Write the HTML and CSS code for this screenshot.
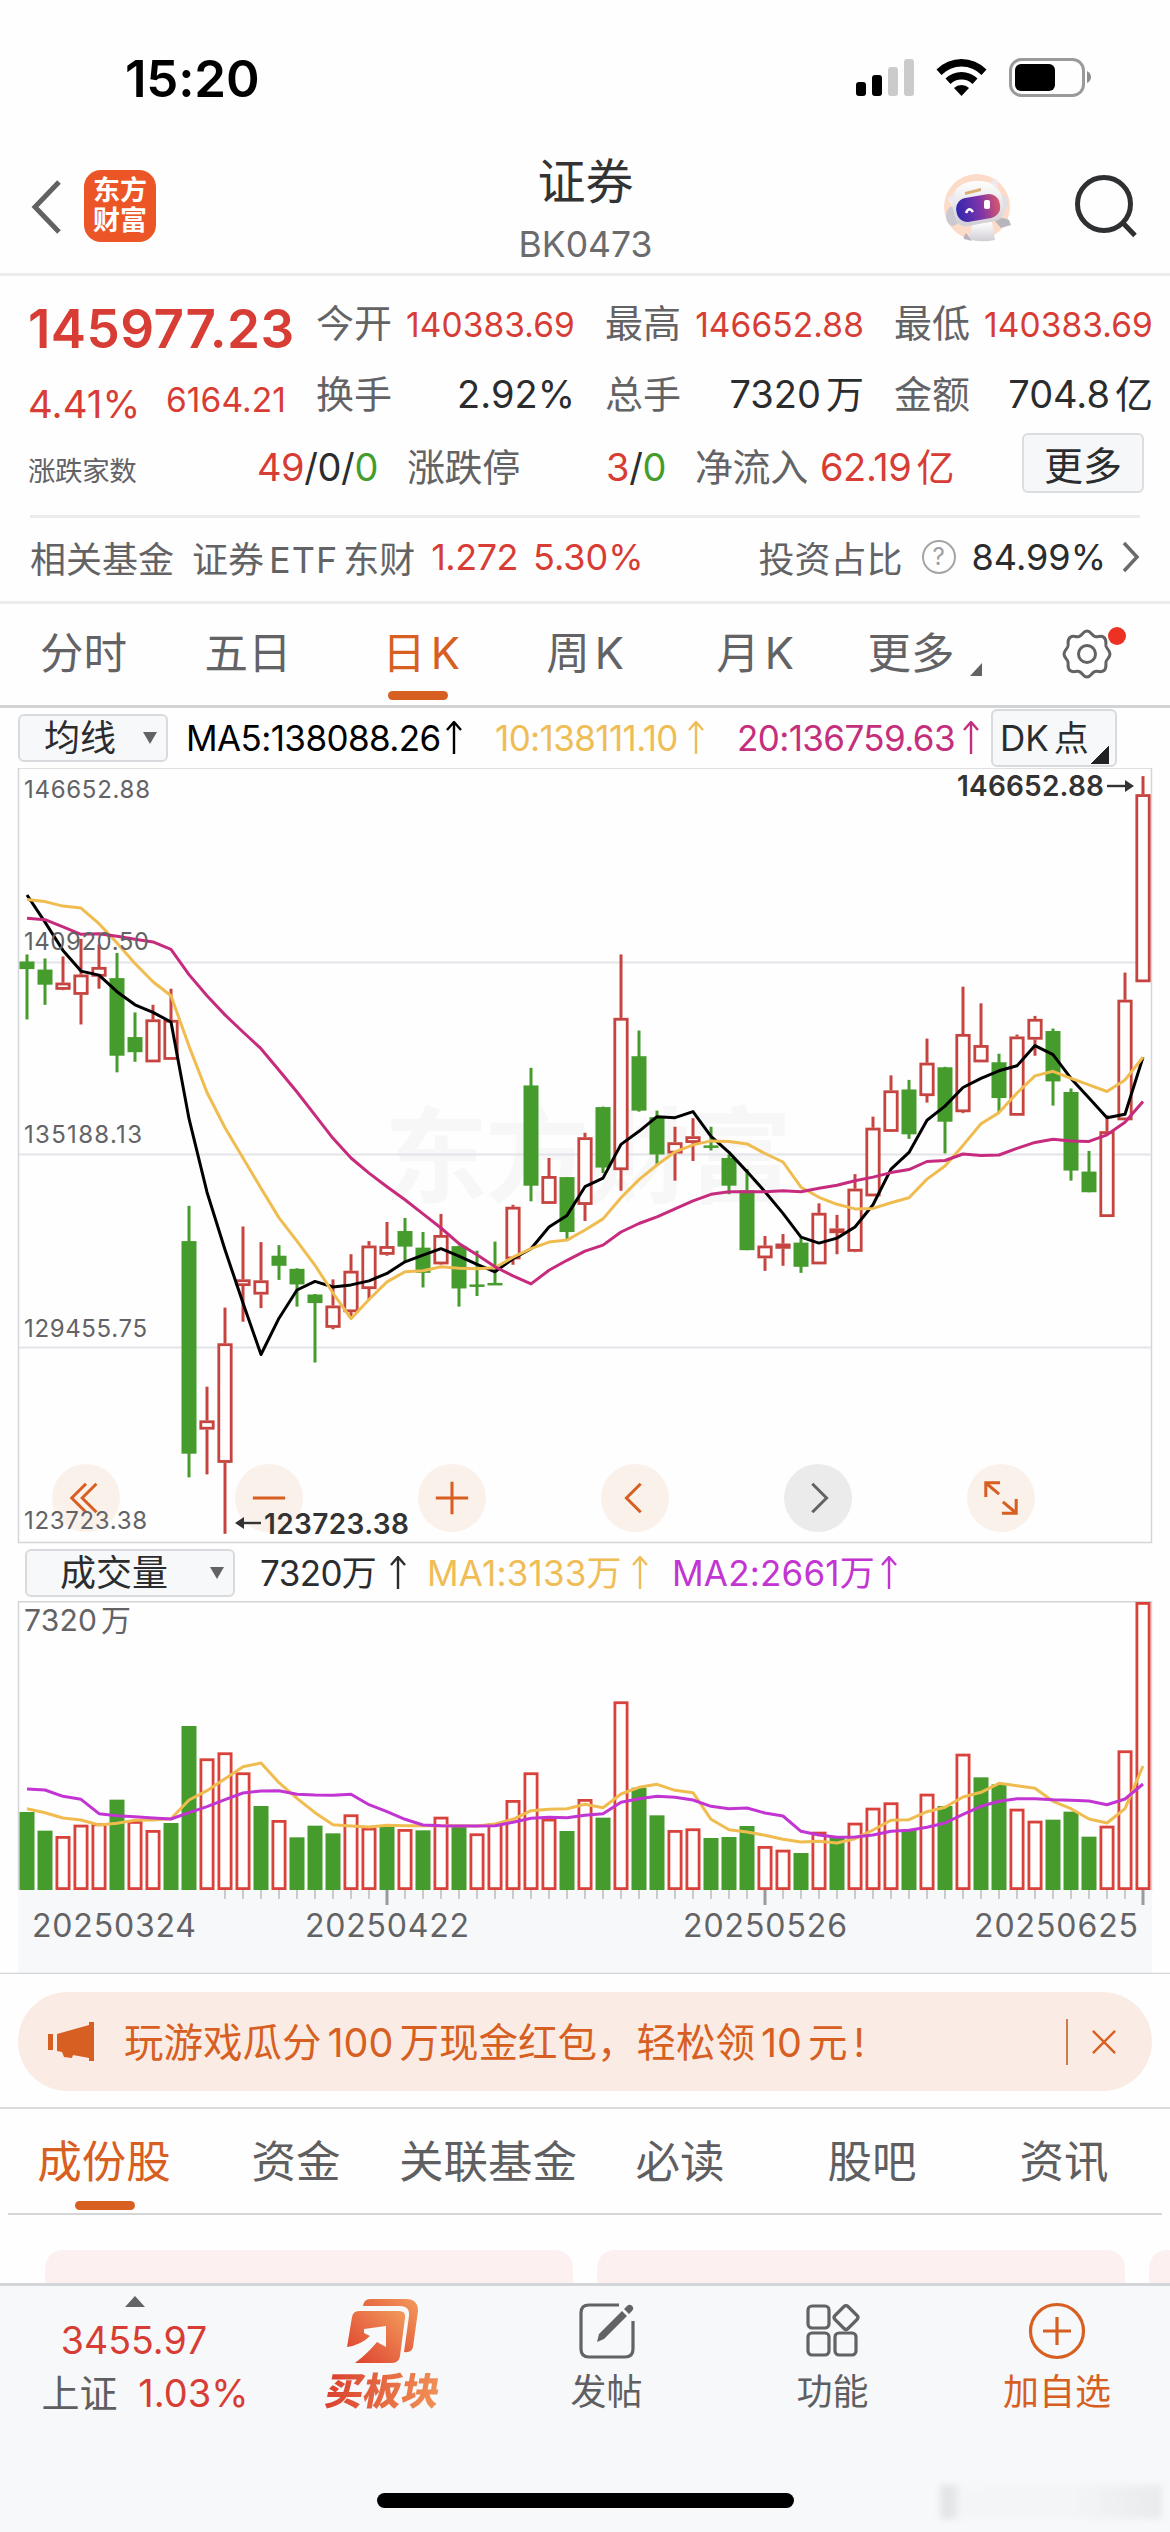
FILE: index.html
```html
<!DOCTYPE html>
<html lang="zh-CN">
<head>
    <meta charset="UTF-8">
    <meta name="viewport" content="width=device-width, initial-scale=1.0">
    <title>证券 BK0473</title>
    <link rel="stylesheet" href="styles.css">
</head>
<body>
    <!-- 状态栏 -->
    <div class="status-bar">
        <span class="time">15:20</span>
        <svg class="status-icons" width="240" height="40" viewBox="0 0 240 40">
            <rect x="1" y="24" width="10" height="14" rx="3"/>
            <rect x="17" y="17" width="10" height="21" rx="3"/>
            <rect x="33" y="9" width="10" height="29" rx="3" fill="#cbcbcb"/>
            <rect x="49" y="1" width="10" height="37" rx="3" fill="#cbcbcb"/>
            <path d="M81.500 11.500a35 35 0 0 1 50 0l-5 5.500a28 28 0 0 0-40 0z"/>
            <path d="M90.500 20.500a23 23 0 0 1 32 0l-5 5.500a16 16 0 0 0-22 0z"/>
            <path d="M99 30a11 11 0 0 1 15 0l-7.500 8z"/>
            <rect x="155.500" y="1.500" width="73" height="36" rx="11" fill="none" stroke="#9a9a9a" stroke-width="3"/>
            <rect x="160" y="6" width="40" height="27" rx="6"/>
            <path d="M232 13v12q4-2 4-6t-4-6z" fill="#8f8f8f"/>
        </svg>
    </div>

    <!-- 标题栏 -->
    <div class="header">
        <svg class="back" width="32" height="56" viewBox="0 0 32 56"><path d="M28 3L4 28l24 25"/></svg>
        <div class="logo">东方<br>财富</div>
        <div class="title">
            <h1>证券</h1>
            <p>BK0473</p>
        </div>
        <svg class="robot" width="68" height="68" viewBox="0 0 68 68">
            <defs>
                <linearGradient id="face" x1="0" y1="0" x2="1" y2="0">
                    <stop offset="0" stop-color="#3026b0"/>
                    <stop offset=".55" stop-color="#7d35a8"/>
                    <stop offset="1" stop-color="#d9586c"/>
                </linearGradient>
                <linearGradient id="shell" x1="0" y1="0" x2="0" y2="1">
                    <stop offset="0" stop-color="#fff"/>
                    <stop offset="1" stop-color="#d0cdd3"/>
                </linearGradient>
            </defs>
            <circle cx="33" cy="33" r="33" fill="#fcdcc9"/>
            <path d="M28 50l-3 15q10 4 26 1l-3-18z" fill="url(#shell)"/>
            <path d="M22 59q-3 4-2 6l8 2M50 46q8-4 15 0l2 5-10 3z" fill="#b9b5bd"/>
            <ellipse cx="9" cy="42" rx="7" ry="10" fill="#cdc9d0"/>
            <ellipse cx="57" cy="29" rx="7" ry="9" fill="#e2dee2"/>
            <path d="M7 28Q10 8 32 7q20-1 26 15l2 15q0 8-9 10l-27 5q-9 1-12-6z" fill="url(#shell)"/>
            <path d="M3 24l9-5-4 14zM46 8l7-3 1 11z" fill="#f0e8ec"/>
            <path d="M21 18l16-4v3l-16 4z" fill="#d9b071"/>
            <rect x="12" y="22" width="44" height="24" rx="11" transform="rotate(-10 34 33)" fill="url(#face)"/>
            <path d="M22 39q3-7 7-1" fill="none" stroke="#fff" stroke-width="2.500"/>
            <rect x="40" y="26" width="6" height="9" rx="2" fill="#fff"/>
        </svg>
        <svg class="search" width="66" height="66" viewBox="0 0 66 66"><circle cx="30" cy="30" r="26.500"/><path d="M48.500 48.500L61 61.500"/></svg>
    </div>

    <!-- 行情概览 -->
    <div class="quote">
        <div class="quote-grid">
            <b class="price">145977.23</b>
            <div class="cell"><label>今开</label><span class="num red">140383.69</span></div>
            <div class="cell"><label>最高</label><span class="num red">146652.88</span></div>
            <div class="cell"><label>最低</label><span class="num red">140383.69</span></div>
            <div class="change red"><span class="pct">4.41%</span><span class="num">6164.21</span></div>
            <div class="cell"><label>换手</label><span>2.92%</span></div>
            <div class="cell"><label>总手</label><span>7320<i>万</i></span></div>
            <div class="cell"><label>金额</label><span>704.8<i>亿</i></span></div>
        </div>
        <div class="quote-row">
            <div class="cell updown"><label class="small">涨跌家数</label><span><em class="red">49</em>/0/<em class="green">0</em></span></div>
            <div class="cell limit"><label>涨跌停</label><span><em class="red">3</em>/<em class="green">0</em></span></div>
            <div class="cell inflow"><label>净流入</label><span class="red">62.19<i>亿</i></span></div>
            <button class="more">更多</button>
        </div>
        <div class="fund">
            <label>相关基金</label>
            <label class="fund-name">证券<span>ETF</span>东财</label>
            <span class="red fund-price">1.272</span>
            <span class="red">5.30%</span>
            <label class="ratio">投资占比</label>
            <span class="help">?</span>
            <span class="ratio-num">84.99%</span>
            <svg width="18" height="32" viewBox="0 0 18 32"><path d="M2 2l13 14L2 30"/></svg>
        </div>
    </div>

    <!-- 周期切换 -->
    <div class="period-tabs">
        <div>分时</div>
        <div>五日</div>
        <div class="active">日<span>K</span></div>
        <div>周<span>K</span></div>
        <div>月<span>K</span></div>
        <div class="has-more">更多</div>
        <div class="setting">
            <svg width="50" height="50" viewBox="0 0 50 50">
                <path d="M25 2c4 0 4.500 4.500 8 5.500 3.500.8 6-1.500 9 1s1.500 5.500 2 8.500c.6 3 4 4.500 4 8s-3.400 5-4 8c-.5 3 1 6-2 8.500s-5.500.2-9 1C29.500 43.500 29 48 25 48s-4.500-4.500-8-5.500c-3.500-.8-6 1.500-9-1S6.500 36 6 33c-.6-3-4-4.500-4-8s3.400-5 4-8c.5-3-1-6 2-8.500s5.500-.2 9-1C20.500 6.500 21 2 25 2z"/>
                <circle cx="25" cy="25" r="8.500"/>
            </svg>
        </div>
    </div>

    <!-- K线 -->
    <div class="ma-row">
        <div class="select">均线<i></i></div>
        <span class="ma ma5">MA5:138088.26<svg class="up"><use href="#up"/></svg></span>
        <span class="ma ma10">10:138111.10<svg class="up"><use href="#up"/></svg></span>
        <span class="ma ma20">20:136759.63<svg class="up"><use href="#up"/></svg></span>
        <div class="dk">DK<span>点</span></div>
    </div>
    <div class="k-chart">
        <div class="chart-tools">
            <span><svg viewBox="0 0 40 40"><path d="M20 5L5 20l15 15M31 5L16 20l15 15"/></svg></span>
            <span><svg viewBox="0 0 40 40"><path d="M3 20h34"/></svg></span>
            <span><svg viewBox="0 0 40 40"><path d="M3 20h34M20 3v34"/></svg></span>
            <span><svg viewBox="0 0 40 40"><path d="M26 5L11 20l15 15"/></svg></span>
            <span class="off"><svg viewBox="0 0 40 40"><path d="M14 5l15 15-15 15"/></svg></span>
            <span><svg viewBox="0 0 40 40"><path d="M19 4H4v15M5 5l13 11M22 24l13 11M21 36h15V21"/></svg></span>
        </div>
        <svg id="kline" width="1170" height="776" viewBox="0 0 1170 776"></svg>
    </div>

    <!-- 成交量 -->
    <div class="vol-row">
        <div class="select">成交量<i></i></div>
        <span class="ma vol">7320万<svg class="up"><use href="#up"/></svg></span>
        <span class="ma vol1">MA1:3133万<svg class="up"><use href="#up"/></svg></span>
        <span class="ma vol2">MA2:2661万<svg class="up"><use href="#up"/></svg></span>
    </div>
    <svg id="volume" width="1170" height="373" viewBox="0 0 1170 373"></svg>

    <!-- 活动横幅 -->
    <div class="banner-wrap">
        <div class="banner">
            <svg class="horn" width="48" height="42" viewBox="0 0 48 42"><path d="M0 13h5v16H0zM9 13L41 4V1h5v39h-5v-3l-16-3-1 3-8-1-2-5-5-1z"/></svg>
            <p>玩游戏瓜分<span>100</span>万现金红包，轻松领<span>10</span>元<span>!</span></p>
            <svg class="close" width="26" height="26" viewBox="0 0 26 26"><path d="M1 1l24 24M25 1L1 25"/></svg>
        </div>
    </div>

    <div class="info-tabs">
        <div class="active">成份股</div>
        <div>资金</div>
        <div>关联基金</div>
        <div>必读</div>
        <div>股吧</div>
        <div>资讯</div>
    </div>
    <div class="cards"><div></div><div></div><div></div></div>

    <!-- 底部工具栏 -->
    <div class="toolbar">
        <div class="index">
            <i class="tri"></i>
            <span class="red index-num">3455.97</span>
            <p>上证 <span class="red">1.03%</span></p>
        </div>
        <div class="buy">
            <svg width="72" height="66" viewBox="0 0 72 66">
                <defs>
                    <linearGradient id="fire" x1="0" y1="1" x2="1" y2="0">
                        <stop offset="0" stop-color="#dd3d2c"/>
                        <stop offset="1" stop-color="#f29a5c"/>
                    </linearGradient>
                </defs>
                <path fill="url(#fire)" d="M16 8q1-7 7-7h36q12 0 12 12l-5 36q-1 6-9 5l5-36q1-10-9-10z"/>
                <path fill="url(#fire)" d="M5 19q1-6 7-6h40q7 0 6 7l-5 38q-1 7-8 7H8q12-9 22-21l9 5V28l-22 3v4l6 3Q14 47 0 49z"/>
            </svg>
            <b>买板块</b>
        </div>
        <div>
            <svg class="line-icon" width="60" height="60" viewBox="0 0 60 60">
                <path d="M42 4H12q-8 0-8 8v36q0 8 8 8h36q8 0 8-8V20"/>
                <path class="pen" d="M50 5q2-2 4-1l2 2q1 2-1 4l-3 3-5-5zM45 10l5 5-23 23-7 3 2-8z"/>
            </svg>
            <p>发帖</p>
        </div>
        <div>
            <svg class="line-icon" width="60" height="60" viewBox="0 0 60 60">
                <rect x="5" y="5" width="21" height="22" rx="4"/>
                <rect x="5" y="32" width="21" height="22" rx="4"/>
                <rect x="32" y="32" width="21" height="22" rx="4"/>
                <path d="M41 5.500q2-2 4 0l9 9q2 2 0 4l-9 9q-2 2-4 0l-9-9q-2-2 0-4z"/>
            </svg>
            <p>功能</p>
        </div>
        <div class="add">
            <svg class="line-icon" width="60" height="60" viewBox="0 0 60 60"><circle cx="30" cy="30" r="26.500"/><path d="M16 30h28M30 16v28"/></svg>
            <p>加自选</p>
        </div>
    </div>
    <div class="home">
        <div class="home-bar"></div>
        <div class="smudge"></div>
    </div>

    <svg width="0" height="0" class="sprite">
        <symbol id="up" viewBox="0 0 16 34"><path d="M8 33V2M1 9l7-8 7 8" fill="none" stroke="currentColor" stroke-width="2.400"/></symbol>
    </svg>

    <script src="chart.js"></script>
</body>
</html>
```
FILE: styles.css
```css
* {
    box-sizing: border-box;
    margin: 0;
    padding: 0;
}

body {
    width: 1170px;
    height: 2532px;
    overflow: hidden;
    background: #fefefe;
    color: #2b2c2e;
    font-family: Inter, "Noto Sans CJK SC", sans-serif;
    font-size: 37px;
}

i, em {
    font-style: normal;
}

svg {
    display: block;
    flex: none;
}

.sprite {
    position: absolute;
}

.red {
    color: #d73d35;
}

.green {
    color: #459c2c;
}

/* 状态栏 */
.status-bar {
    height: 140px;
    padding: 16px 75px 0 125px;
    display: flex;
    align-items: center;
    justify-content: space-between;
    color: #000;
}

.time {
    font-size: 51px;
    font-weight: 600;
    letter-spacing: -0.2px;
}

/* 标题栏 */
.header {
    height: 136px;
    padding: 0 30px 0 31px;
    border-bottom: 3px solid #ececee;
    display: flex;
    align-items: flex-start;
    position: relative;
}

.back {
    margin-top: 39px;
    fill: none;
    stroke: #626265;
    stroke-width: 5;
}

.logo {
    width: 72px;
    height: 72px;
    margin: 30px 0 0 21px;
    padding-top: 6px;
    border-radius: 17px;
    background: #ec5626;
    color: #fff;
    font-size: 27px;
    font-weight: 700;
    line-height: 30px;
    text-align: center;
}

.title {
    flex: 1;
    padding-left: 71px;
    text-align: center;
}

.title h1 {
    margin-top: 15px;
    font-size: 48px;
    font-weight: 400;
    line-height: 54px;
    color: #333;
}

.title p {
    margin-top: 14px;
    font-size: 35.500px;
    line-height: 44px;
    color: #6b6b6e;
}

.robot {
    margin: 34px 62px 0 0;
}

.search {
    margin-top: 34px;
    fill: none;
    stroke: #2f3031;
    stroke-width: 5;
}

/* 行情概览 */
.quote {
    height: 328px;
    border-bottom: 3px solid #ececee;
}

.quote label {
    color: #636366;
}

.quote-grid {
    height: 154px;
    padding: 12px 19px 0 28px;
    display: grid;
    grid-template-columns: 258px 259px 259px 259px;
    grid-template-rows: 71px 72px;
    column-gap: 30px;
}

.price {
    color: #d73d35;
    font-size: 53px;
    font-weight: 600;
    line-height: 82px;
    letter-spacing: 0.4px;
}

.cell {
    display: flex;
    justify-content: space-between;
    align-items: baseline;
    line-height: 70px;
    white-space: nowrap;
    font-size: 38px;
}

.cell i {
    margin-left: 5px;
}

.cell .num, .change .num {
    font-size: 33.500px;
    letter-spacing: 0.1px;
}

.change {
    display: flex;
    justify-content: space-between;
    line-height: 90px;
    font-size: 38.500px;
}

.change .num {
    line-height: 82px;
}

.quote-row {
    height: 88px;
    margin: 0 30px;
    display: flex;
    border-bottom: 3px solid #ececee;
}

.quote-row .cell {
    line-height: 74px;
    letter-spacing: -0.4px;
}

.cell .small {
    margin-left: -2px;
    font-size: 27.500px;
}

.updown {
    width: 348px;
    margin-right: 29px;
}

.limit {
    width: 259px;
    margin-right: 29px;
}

.inflow {
    width: 259px;
}

.more {
    width: 122px;
    height: 60px;
    margin: 3px -4px 0 auto;
    border: 2px solid #dcdde0;
    border-radius: 6px;
    background: #f6f7f9;
    color: #2b2c2e;
    font: 39px/56px "Noto Sans CJK SC", sans-serif;
}

.fund {
    height: 78px;
    padding: 0 30px;
    display: flex;
    align-items: center;
    font-size: 36px;
    white-space: nowrap;
}

.fund-name {
    margin: 0 16px 0 18px;
}

.fund-name span {
    margin: 0 5px;
    letter-spacing: 1px;
}

.fund-price {
    margin-right: 15px;
    letter-spacing: -0.5px;
}

.ratio {
    margin-left: auto;
}

.help {
    width: 34px;
    height: 34px;
    margin: 0 16px 0 19px;
    border: 2px solid #a5a5a8;
    border-radius: 50%;
    color: #a0a0a3;
    font-size: 24px;
    line-height: 30px;
    text-align: center;
}

.ratio-num {
    margin-right: 16px;
}

.fund svg {
    fill: none;
    stroke: #6a6a6d;
    stroke-width: 3.500;
}

/* 周期切换 */
.period-tabs {
    height: 104px;
    border-bottom: 3px solid #d2d3d5;
    display: grid;
    grid-template-columns: 167px 162px 184px 144px 196px 116px 201px;
    font-size: 43.500px;
    line-height: 99px;
    color: #636366;
    text-align: center;
}

.period-tabs > div {
    position: relative;
}

.period-tabs span {
    margin-left: 5px;
}

.period-tabs .active, .info-tabs .active {
    color: #d75f22;
}

.period-tabs .active::after {
    content: "";
    position: absolute;
    left: 59px;
    bottom: 5px;
    width: 60px;
    height: 9px;
    border-radius: 5px;
    background: #d75f22;
}

.has-more::after {
    content: "";
    position: absolute;
    right: -13px;
    top: 59px;
    border-left: 12px solid transparent;
    border-bottom: 13px solid #636366;
}

.setting svg {
    margin: 25px 0 0 93px;
    fill: none;
    stroke: #636366;
    stroke-width: 3;
}

.setting::after {
    content: "";
    position: absolute;
    left: 139px;
    top: 23px;
    width: 18px;
    height: 18px;
    border-radius: 50%;
    background: #eb3223;
}

/* 指标行 */
.ma-row, .vol-row {
    height: 60px;
    padding-left: 18px;
    display: flex;
    font-size: 35px;
    white-space: nowrap;
}

.select {
    width: 150px;
    height: 48px;
    margin-top: 6px;
    padding: 0 9px 0 24px;
    border: 2px solid #d9dadd;
    border-radius: 6px;
    background: #f7f8fa;
    display: flex;
    align-items: center;
    justify-content: space-between;
    font-size: 36px;
    line-height: 44px;
}

.select i {
    border: 7px solid transparent;
    border-top: 12px solid #636366;
    border-bottom: 0;
}

.ma {
    display: flex;
    justify-content: space-between;
    align-items: center;
    line-height: 60px;
    letter-spacing: -0.6px;
}

.up {
    width: 16px;
    height: 34px;
}

.ma5 {
    width: 276px;
    margin-left: 18px;
    color: #000;
}

.ma10 {
    width: 209px;
    margin-left: 33px;
    color: #efbd55;
}

.ma20 {
    width: 242px;
    margin-left: 33px;
    color: #c42e7d;
}

.dk {
    width: 126px;
    height: 58px;
    margin: 1px 0 0 12px;
    padding-left: 7px;
    border: 2px solid #d9dadd;
    border-radius: 6px;
    background: linear-gradient(to bottom right, transparent 50%, #222 50%) 97px 35px / 19px 18px no-repeat #f7f8fa;
    line-height: 54px;
}

.dk span {
    margin-left: 5px;
}

/* 图表 */
.k-chart {
    height: 776px;
    position: relative;
}

/* 曲线和价格盖在按钮上面 */
#kline {
    position: relative;
}

.chart-tools {
    position: absolute;
    left: 52px;
    top: 696px;
    display: flex;
    gap: 115px;
}

.chart-tools span {
    width: 68px;
    height: 68px;
    border-radius: 50%;
    background: #fbf1eb;
    display: flex;
    align-items: center;
    justify-content: center;
}

.chart-tools svg {
    width: 38px;
    height: 38px;
    fill: none;
    stroke: #d75f22;
    stroke-width: 3.200;
}

.chart-tools .off {
    background: #ebebec;
}

.off svg {
    stroke: #636366;
}

.label {
    font-size: 24px;
    fill: #636366;
}

.mark {
    font-size: 28px;
    font-weight: 600;
    fill: #333;
}

.watermark {
    font-size: 104px;
    font-weight: 700;
    fill: #f7f7f8;
}

.vol-row {
    height: 57px;
    padding-left: 25px;
}

.vol-row .select {
    width: 210px;
    margin-top: 5px;
    padding-left: 33px;
}

.vol {
    width: 146px;
    margin-left: 25px;
}

.vol1 {
    width: 221px;
    margin-left: 21px;
    color: #efbd55;
    letter-spacing: 0.2px;
}

.vol2 {
    width: 225px;
    margin-left: 24px;
    color: #c235d2;
    letter-spacing: 0.2px;
}

.vol-label {
    font-size: 30px;
    fill: #636366;
}

.date {
    font-size: 32px;
    fill: #636366;
}

/* 活动横幅 */
.banner-wrap {
    height: 135px;
    padding: 18px 18px 0;
    border-bottom: 2px solid #d9dadc;
}

.banner {
    height: 99px;
    padding: 0 36px 0 30px;
    border-radius: 50px;
    background: #faece5;
    color: #d75f22;
    display: flex;
    align-items: center;
    font-size: 39.500px;
}

.horn {
    fill: #d75f22;
}

.banner p {
    margin: -5px 0 0 28px;
}

.banner span {
    margin: 0 6px;
}

.close {
    width: 50px;
    height: 46px;
    margin-left: auto;
    padding: 10px 0 10px 24px;
    border-left: 2px solid #d07a50;
    fill: none;
    stroke: #d75f22;
    stroke-width: 2.600;
}

.info-tabs {
    height: 106px;
    margin: 0 8px;
    border-bottom: 2px solid #d4d5d7;
    display: grid;
    grid-template-columns: repeat(6, 192px);
    font-size: 44.500px;
    line-height: 106px;
    color: #5f5f62;
    text-align: center;
    white-space: nowrap;
}

.info-tabs .active {
    position: relative;
}

.info-tabs .active::after {
    content: "";
    position: absolute;
    left: 67px;
    bottom: 5px;
    width: 60px;
    height: 9px;
    border-radius: 5px;
    background: #d75f22;
}

.cards {
    height: 68px;
    padding: 35px 0 0 45px;
    display: flex;
    gap: 24px;
    overflow: hidden;
}

.cards div {
    flex: none;
    width: 528px;
    height: 60px;
    border-radius: 18px 18px 0 0;
    background: #fcf0f0;
}

/* 底部工具栏 */
.toolbar {
    height: 150px;
    border-top: 3px solid #d4d5d8;
    background: #f6f8fa;
    display: grid;
    grid-template-columns: 290px 186px 261px 191px 258px;
    font-size: 36px;
    line-height: 50px;
    color: #5f5f62;
}

.toolbar > div {
    padding-top: 15px;
    display: flex;
    flex-direction: column;
    align-items: center;
}

.toolbar p {
    margin-top: 6px;
}

.line-icon {
    fill: none;
    stroke: #636366;
    stroke-width: 3.200;
}

.line-icon .pen {
    fill: #636366;
    stroke: none;
}

.toolbar .index {
    padding-top: 10px;
}

.tri {
    margin-right: 20px;
    border: 10px solid transparent;
    border-bottom: 11px solid #636366;
    border-top: 0;
}

.index-num {
    height: 50px;
    margin: 9px 22px 0 0;
    font-size: 37.500px;
}

.toolbar .index p {
    margin-top: 2px;
    font-size: 38px;
}

.index p span {
    margin-left: 10px;
}

.toolbar .buy {
    padding-top: 12px;
}

.buy b {
    margin-top: 2px;
    padding: 0 4px;
    font-size: 38px;
    font-weight: 900;
    transform: skewX(-10deg);
    background: linear-gradient(to right, #d93e2d, #f19557);
    -webkit-background-clip: text;
    color: transparent;
}

.toolbar .add {
    color: #d75f22;
}

.add .line-icon {
    stroke: #d75f22;
}

.home {
    height: 101px;
    padding-top: 60px;
    background: #f6f8fa;
    position: relative;
}

.home-bar {
    width: 417px;
    height: 15px;
    margin: 0 auto;
    border-radius: 8px;
    background: #000;
}

.smudge {
    position: absolute;
    right: 8px;
    top: 52px;
    width: 222px;
    height: 34px;
    background: linear-gradient(to right, #dcdee0 0, #dcdee0 14px, #f3f5f6 20px, #f3f4f5 60%, #e4e5e7);
    filter: blur(3px);
    opacity: 0.7;
}
```
FILE: chart.js
```js
const GREEN = '#459c2c', RED = '#c54440';
const STEP = 18, X0 = 27;

// 每根K线：颜色, 最高, 最低, 实体上沿, 实体下沿（网格单位）
const candles = [
    'g 386 515 400 415', 'g 394 486 416 446', 'r 390 457 442 456', 'r 355 525 426 466', 'r 366 454 411 430',
    'g 383 620 433 587', 'g 501 599 550 580', 'r 486 600 515 600', 'r 454 595 516 595', 'g 885 1424 955 1377',
    'r 1244 1418 1311 1329', 'r 1087 1536 1158 1395', 'r 926 1115 1031 1044', 'r 957 1088 1033 1061', 'g 963 1032 984 1004',
    'g 1009 1085 1010 1041', 'g 1060 1196 1061 1078', 'r 1031 1130 1083 1127', 'r 981 1105 1014 1096', 'r 955 1072 964 1050',
    'r 917 984 965 982', 'g 909 995 935 966', 'g 937 1047 968 1018', 'r 901 1002 943 1001', 'g 964 1085 965 1049',
    'g 974 1064 1041 1046', 'g 956 1042 1038 1043', 'r 883 1002 887 991', 'g 611 876 646 845', 'r 790 881 826 881',
    'g 828 952 828 937', 'r 740 915 749 883', 'g 688 820 689 809', 'r 386 855 512 814', 'g 537 698 588 696',
    'g 696 805 709 783', 'r 728 835 759 781', 'r 711 796 747 760', 'g 728 775 765 770', 'g 783 862 790 845',
    'g 812 973 854 973', 'r 945 1014 964 989', 'r 941 1004 960 970', 'g 949 1018 958 1006', 'r 880 1001 899 1001',
    'r 903 981 930 939', 'r 822 977 851 976', 'r 708 866 730 866', 'r 626 738 656 738', 'g 635 752 654 743',
    'r 553 680 601 667', 'g 609 781 610 718', 'r 450 701 544 699', 'r 483 600 566 600', 'g 583 699 600 671',
    'r 545 706 549 706', 'r 508 587 514 555', 'g 533 686 538 638', 'g 652 835 659 815', 'g 776 858 817 858',
    'r 705 907 737 907', 'r 422 715 476 715', 'r 32 441 68 441'
];
const ma5 = [268,322,378,419,427,460,486,501,520,712,858,972,1078,1180,1108,1052,1035,1046,1042,1034,1019,996,983,970,985,1001,1016,990,970,927,904,847,830,763,737,708,710,698,747,779,817,857,900,947,959,949,927,883,812,779,715,687,650,632,617,607,567,585,632,671,710,703,590];
const ma10 = [277,281,290,294,325,363,404,440,468,568,660,730,790,850,909,955,1003,1058,1109,1071,1036,1016,1014,1006,1009,1010,1008,987,970,957,953,933,911,869,833,804,778,764,756,757,762,781,798,848,868,882,891,890,879,869,832,806,765,722,700,661,627,618,632,645,658,635,590];
const ma20 = [314,317,331,346,345,350,356,361,376,426,468,506,540,573,616,659,705,751,790,820,847,873,901,929,960,982,1006,1024,1040,1013,993,975,963,937,920,907,891,875,862,857,857,857,855,857,850,844,835,828,819,813,797,795,782,785,784,771,759,753,756,757,744,719,678];

// 成交量柱顶（网格单位），颜色单独存
const volColor = 'ggrrrgrrggrrrgrgggrrgrgrgrrrrrgrgrggrrgggrrgrgrrrgrgrggrrgggrrr';
const vol = [816,872,888,854,850,779,843,870,849,558,655,637,697,798,840,892,857,880,823,863,858,867,871,830,860,880,850,780,697,836,873,777,833,484,743,826,870,865,894,891,858,918,929,939,875,892,848,803,787,870,761,798,641,712,733,806,842,839,815,890,857,631,186];
const volMa1 = [806,818,834,840,855,850,841,840,836,780,752,716,680,669,728,775,818,854,858,861,856,857,857,857,857,858,852,838,812,808,806,793,803,762,742,733,751,758,838,869,876,886,898,906,904,909,896,870,841,839,815,802,771,757,730,737,745,784,806,837,849,806,678];
const volMa2 = [747,750,769,778,821,827,830,834,837,818,800,779,759,753,752,763,765,766,763,794,815,838,855,857,858,858,857,847,835,832,833,826,821,787,776,769,772,780,799,806,804,819,828,874,885,892,891,885,874,871,862,849,823,799,784,776,776,779,781,783,794,777,732];

const cx = i => X0 + i * STEP;
const line = (data, y, color) =>
    `<polyline points="${data.map((v, i) => cx(i) + ',' + y(v).toFixed(1)).join(' ')}" fill="none" stroke="${color}" stroke-width="3" stroke-linejoin="round"/>`;
const rect = (x, y, w, h, attr) => `<rect x="${x}" y="${y}" width="${w}" height="${h}" ${attr}/>`;

function drawKline() {
    const y = v => v / 1.985 - 8;
    let s = rect(18.5, 0, 1133, 774.5, 'fill="none" stroke="#d4d5d8" stroke-width="1.5"');
    s += '<text class="watermark" x="384" y="427" textLength="408">东方财富</text>';
    [194.5, 386.5, 579.5].forEach(g => s += `<path d="M19 ${g}H1151" stroke="#e3e4ea" stroke-width="2"/>`);
    candles.forEach((c, i) => {
        const [t, ...v] = c.split(' ');
        const [hi, lo, top, bot] = v.map(n => y(+n));
        const color = t === 'g' ? GREEN : RED;
        if (t === 'g') {
            s += rect(cx(i) - 1.5, hi, 3, lo - hi, `fill="${color}"`);
            s += rect(cx(i) - 7.5, top, 15, bot - top, `fill="${color}"`);
        } else {
            s += rect(cx(i) - 1.5, hi, 3, top - hi, `fill="${color}"`);
            s += rect(cx(i) - 1.5, bot, 3, lo - bot, `fill="${color}"`);
            s += rect(cx(i) - 6.2, top + 1.3, 12.4, Math.max(bot - top - 2.6, 2), `fill="#fefefe" stroke="${color}" stroke-width="2.8"`);
        }
    });
    s += line(ma5, y, '#000') + line(ma10, y, '#f0bc50') + line(ma20, y, '#c62b7d');
    [['146652.88', 30, 126], ['140920.50', 182, 125], ['135188.13', 375, 118], ['129455.75', 568.5, 123], ['123723.38', 761, 123]].forEach(([t, ly, w]) => {
        s += `<text class="label" x="24" y="${ly}" textLength="${w}">${t}</text>`;
    });
    s += '<text class="mark" x="957" y="28" textLength="147">146652.88</text>';
    s += '<path d="M1107 18h22" stroke="#333" stroke-width="2.4"/><path d="M1125 12l9 6-9 6z" fill="#333"/>';
    s += '<text class="mark" x="264" y="766" textLength="145">123723.38</text>';
    s += '<path d="M240 755h21" stroke="#333" stroke-width="2.4"/><path d="M244 749l-9 6 9 6z" fill="#333"/>';
    document.getElementById('kline').innerHTML = s;
}

function drawVolume() {
    const y = v => v / 3 - 61;
    const base = 289;
    let s = rect(18, base, 1134, 83, 'fill="#f7f8fa"');
    s += `<path d="M18.5 ${base}V.8H1151.5V${base}" fill="none" stroke="#d4d5d8" stroke-width="1.5"/>`;
    s += '<path d="M0 372.500H1170" stroke="#d4d5d8" stroke-width="1.500"/>';
    vol.forEach((v, i) => {
        if (volColor[i] === 'g') {
            s += rect(cx(i) - 7.5, y(v), 15, base - y(v), `fill="${GREEN}"`);
        } else {
            s += rect(cx(i) - 6.1, y(v) + 1.4, 12.2, base - y(v) - 2.8, 'fill="#fefefe" stroke="#d9423a" stroke-width="2.8"');
        }
        // 刻度
        if (i > 10) {
            const big = i === 20 || i === 41 || i === 62;
            s += `<path d="M${cx(i)} ${base}v${big ? 15 : 9}" stroke="#9b9b9e" stroke-width="${big ? 3 : 1}"/>`;
        }
    });
    s += line(volMa1, y, '#f0bc50') + line(volMa2, y, '#c235d2');
    s += '<text class="vol-label" x="24" y="30" textLength="73">7320</text><text class="vol-label" x="101" y="30">万</text>';
    [['20250324', 32], ['20250422', 305], ['20250526', 683], ['20250625', 974]].forEach(([t, x]) => {
        s += `<text class="date" x="${x}" y="336" textLength="164">${t}</text>`;
    });
    document.getElementById('volume').innerHTML = s;
}

drawKline();
drawVolume();
```
